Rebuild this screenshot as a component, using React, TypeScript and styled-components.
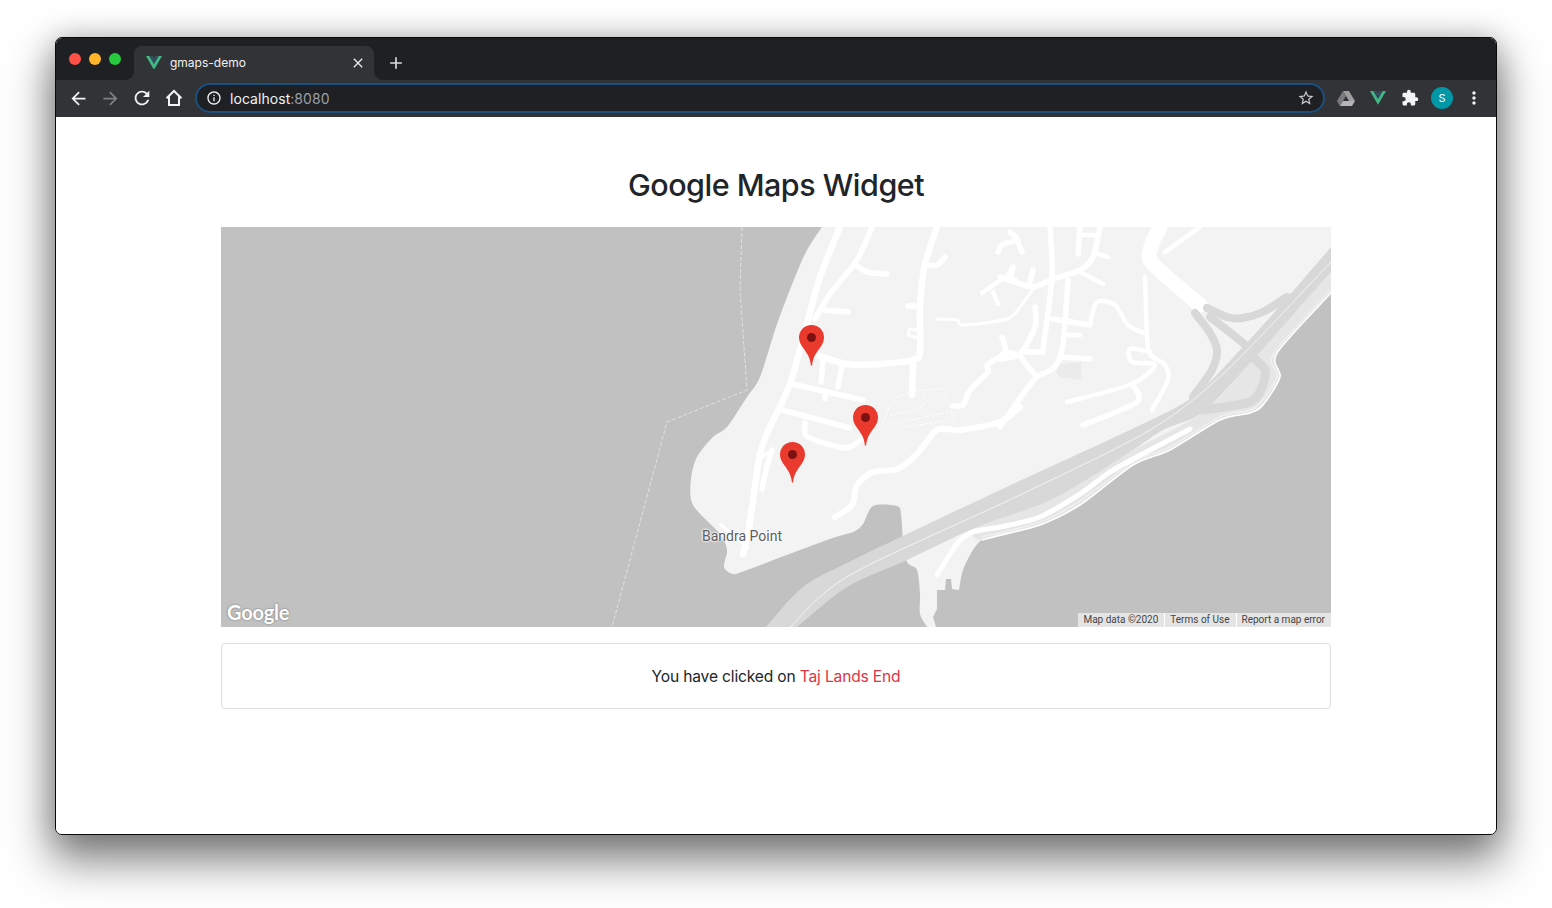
import React from "react";
import styled, { createGlobalStyle } from "styled-components";
import { MdArrowBack, MdArrowForward, MdRefresh, MdClose, MdAdd, MdExtension, MdMoreVert, MdStarBorder, MdInfoOutline } from "react-icons/md";

const Global = createGlobalStyle`
  html, body { margin: 0; padding: 0; background: #fff; }
  body { font-family: Inter, "Liberation Sans", sans-serif; }
`;

const Stage = styled.div`
  width: 1552px; height: 908px; box-sizing: border-box; padding: 37px 55px 0; overflow: hidden;
`;
const Win = styled.div`
  width: 1442px; height: 798px; box-sizing: border-box; border: 1px solid #0a0a0a; border-radius: 7px;
  overflow: hidden; display: flex; flex-direction: column; background: #fff;
  box-shadow: 0 22px 44px 4px rgba(0,0,0,.5), 0 0 28px rgba(0,0,0,.18);
`;
const TitleBar = styled.div`
  height: 42px; flex: none; background: #1f2024; display: flex; align-items: flex-end;
`;
const Lights = styled.div`
  width: 78px; height: 42px; flex: none; box-sizing: border-box; padding: 15px 0 0 13px; display: flex; gap: 8px;
`;
const Light = styled.span<{ $c: string }>`
  width: 12px; height: 12px; border-radius: 50%; background: ${p => p.$c};
`;
const Tab = styled.div`
  width: 240px; height: 34px; box-sizing: border-box; background: #323337; border-radius: 8px 8px 0 0;
  display: flex; align-items: center; padding: 0 0 1px 12px; color: #f1f1f2; font-size: 12px; position: relative;
  &::before, &::after { content: ""; position: absolute; bottom: 0; width: 8px; height: 8px; }
  &::before { left: -8px; background: radial-gradient(circle at 0 0, #1f2024 7.5px, #323337 8px); }
  &::after { right: -8px; background: radial-gradient(circle at 100% 0, #1f2024 7.5px, #323337 8px); }
`;
const TabTitle = styled.span`margin-left: 8px; flex: 1;`;
const NewTab = styled.div`
  width: 44px; height: 34px; display: flex; align-items: center; justify-content: center; color: #dcdcde; font-size: 18px;
`;
const Toolbar = styled.div`
  height: 37px; box-sizing: border-box; flex: none; background: #323337; display: flex; align-items: center; padding: 0 6px 1px;
`;
const IconBtn = styled.div<{ $c?: string }>`
  width: 32px; height: 32px; flex: none; display: flex; align-items: center; justify-content: center;
  color: ${p => p.$c || "#f1f3f4"}; font-size: 20px;
`;
const Omni = styled.div`
  flex: 1; height: 30px; box-sizing: border-box; margin: 0 5px; border: 2px solid #1b4f7d; border-radius: 15px;
  background: #1f2024; display: flex; align-items: center; padding: 0 8px 0 9px; color: #f1f3f4; font-size: 14px;
`;
const Host = styled.span`margin-left: 8px; flex: 1; letter-spacing: .05px;`;
const Port = styled.span`color: #9aa0a6;`;
const Star = styled(MdStarBorder)`color: #c9cacc;`;
const Avatar = styled.div`
  width: 22px; height: 22px; border-radius: 50%; background: #0097a7; color: #fff; font-size: 11px;
  display: flex; align-items: center; justify-content: center;
`;
const Page = styled.main`
  flex: 1; background: #fff; display: flex; flex-direction: column; align-items: center; padding-top: 48px;
`;
const Heading = styled.h1`
  margin: 0 0 22px; font-size: 30.5px; line-height: 40px; font-weight: 500; color: #212529; letter-spacing: -.5px;
`;
const MapBox = styled.div`
  width: 1110px; height: 400px; position: relative; overflow: hidden; background: #c1c1c1; flex: none;
`;
const MapSvg = styled.svg`display: block; width: 1110px; height: 400px;`;
const Place = styled.span`
  position: absolute; left: 481px; top: 301px; font: 14px/16px Roboto, sans-serif; color: #5c5c5c;
  text-shadow: 0 0 2px #fff, 0 0 2px #fff, 0 0 3px #fff; white-space: nowrap;
`;
const GoogleMark = styled.span`
  position: absolute; left: 6px; top: 372px; font: 700 20px/26px Lato, sans-serif; color: #fff; letter-spacing: -.2px;
  text-shadow: 0 0 2px rgba(70,70,70,.7);
`;
const Attribution = styled.div`
  position: absolute; right: 0; bottom: 0; height: 14px; display: flex; background: #e4e4e4;
  font: 10px/14px Roboto, sans-serif; color: #444;
`;
const AttrItem = styled.span`
  padding: 0 6px 0 5px; white-space: nowrap; & + & { border-left: 1px solid #fff; }
`;
const Result = styled.div`
  width: 1110px; height: 66px; box-sizing: border-box; margin-top: 16px; border: 1px solid #dfdfdf; border-radius: 4px;
  padding-top: 23px; text-align: center; font-size: 15.6px; line-height: 20px; color: #212529; letter-spacing: -.17px;
`;
const Hit = styled.span`color: #dc3545;`;

const VueLogo = ({ size }: { size: number }) => (
  <svg width={size} height={size * 0.87} viewBox="0 0 256 221">
    <path fill="#41B883" d="M204.8 0H256L128 220.8 0 0h97.92L128 51.2 157.44 0z" />
    <path fill="#34495E" d="M50.56 0L128 133.12 204.8 0h-47.36L128 51.2 98.56 0z" />
  </svg>
);
const Home = () => (
  <svg width="20" height="20" viewBox="0 0 20 20" fill="none" stroke="#f1f3f4" strokeWidth="2" strokeLinejoin="miter">
    <path d="M2.5 10.2 10 3l7.5 7.2M5 8.5V17h10V8.5" />
  </svg>
);
const Drive = () => (
  <svg width="18" height="16" viewBox="0 0 18 16">
    <path fill="#9e9e9e" d="M6 1h6l6 10h-6z" />
    <path fill="#7a7a7a" d="M6 1 0 11l3 5 6-10z" />
    <path fill="#b5b5b5" d="M3 16h12l3-5H6z" />
    <path fill="#323337" d="M7.4 11 9 8.2l1.6 2.8z" />
  </svg>
);
const Pin = ({ x, y }: { x: number; y: number }) => (
  <g transform={`translate(${x} ${y})`}>
    <path fill="#ea3a2d" d="M0 0C-7 0-12.5 5.5-12.5 12.4c0 4 1.7 6.9 4.200 10.500C-4.800 27.900-1.300 32-.6 40.500h1.200C1.300 32 4.800 27.900 8.300 22.900c2.500-3.600 4.200-6.500 4.200-10.500C12.500 5.500 7 0 0 0z" />
    <circle cy="12.500" r="4.500" fill="#7c1111" />
  </g>
);

// Draws a hand-traced list of "x y x y ..." points as a smooth curve.
const curve = (pts: string, close = false, t = 0.14) => {
  const n = pts.trim().split(/\s+/).map(Number);
  const p: [number, number][] = [];
  for (let i = 0; i < n.length; i += 2) p.push([n[i], n[i + 1]]);
  const at = (i: number) => (close ? p[(i + p.length) % p.length] : p[Math.max(0, Math.min(p.length - 1, i))]);
  let d = `M${p[0][0]} ${p[0][1]}`;
  const end = close ? p.length : p.length - 1;
  for (let i = 0; i < end; i++) {
    const a = at(i - 1), b = at(i), c = at(i + 1), e = at(i + 2);
    d += `C${(b[0] + (c[0] - a[0]) * t).toFixed(1)} ${(b[1] + (c[1] - a[1]) * t).toFixed(1)} ${(c[0] - (e[0] - b[0]) * t).toFixed(1)} ${(c[1] - (e[1] - b[1]) * t).toFixed(1)} ${c[0]} ${c[1]}`;
  }
  return d + (close ? "z" : "");
};

const coast = "982 540 1000 535 1040 525 1080 505 1133 465 1170 450 1220 420 1250 413 1263 405 1280 377 1277 353 1331 293";
const landWest = "822 227 807 250 795 277 777 324 760 377 747 397 727 427 713 437 697 457 691 479 693 505 720 534 727 550 724 567 733 574 747 570 827 540 853 532 863 524 873 506 897 506 901 514 903 540 907 562 917 570 920 594 920 614 927 627";
const landNotch = "M927 627H936L933 617 937 609V590H945L946 579H951L952 589 959 590";
const landEast = "959 590 963 570 973 550 982 540 1000 535 1040 525 1080 505 1133 465 1170 450 1220 420 1250 413 1263 405 1280 377 1277 353 1331 293";
const land = `${curve(landWest)}${landNotch.replace(/^M/, "L")}${curve(landEast).replace(/^M[^C]*/, "")}L1331 227z`;
const highway = `${curve("1331 247 1287 298 1240 350 1193 397 1130 430 1000 490 853 560 803 587 766 627")}L797 627${curve("797 627 847 587 907 560 977 527 1053 499 1130 452 1163 430 1203 412 1253 360 1315 290 1331 272").replace(/^M[^C]*/, "")}z`;
const lightArea = `${curve("1331 272 1253 360 1203 412 1130 452 1053 499 977 527 982 540 1040 525 1080 505 1133 465 1170 450 1220 420 1250 413 1263 405 1280 377 1277 353 1331 293")}z`;

const roads: [number, string][] = [
  [6.5, "840 227 820 277 808 320 790 384 770 427 760 454 752 507 748 534 743 554"],
  [5.5, "872 227 857 260 830 294 815 319"],
  [5.5, "855 264 867 272 887 274"],
  [5.5, "823 310 848 312"],
  [6.5, "937 227 925 264 920 307 920 352 913 360 880 364 847 364 817 355"],
  [5.5, "925 265 937 265 945 257"],
  [5.5, "908 306 920 306"],
  [3, "920 331 910 329 909 335 920 338"],
  [6.5, "913 364 912 395"],
  [5.5, "823 360 821 382"],
  [5.5, "842 365 838 387"],
  [5.5, "792 384 863 400"],
  [5.5, "825 394 825 399"],
  [5.5, "782 410 850 428"],
  [5.5, "805 423 808 437 847 448 865 435"],
  [5.5, "772 450 766 470 762 489"],
  [3, "772 450 762 457"],
  [3, "720 524 748 548"],
  [6, "835 517 852 505 857 485 873 472 897 469 917 454 937 430 960 430 1000 422 1020 407"],
  [5.5, "1002 337 1005 352 987 365 988 372 970 390 963 405 953 406"],
  [5.5, "1005 352 1020 355"],
  [3, "937 319 957 320 963 325 1007 319 1020 307 1033 289"],
  [4.5, "982 293 1007 277 1020 284"],
  [4.5, "993 292 998 304"],
  [4.5, "1012 267 1007 277"],
  [5.5, "998 252 1003 244 1017 240 1010 232"],
  [5.5, "1017 240 1022 252"],
  [5.5, "1050 227 1052 277 1043 350"],
  [5.5, "1068 280 1063 344 1055 367 1037 377 1023 394 1007 417 1000 427"],
  [5.5, "1080 227 1078 254"],
  [5.5, "1100 227 1093 257 1080 270 1053 279 1033 287 1010 280 1000 277"],
  [4.5, "1082 235 1098 235"],
  [4.5, "1098 254 1108 257"],
  [4.5, "1080 272 1103 284"],
  [5.5, "1013 267 1010 280"],
  [5.5, "1033 270 1030 282"],
  [5.5, "1035 307 1035 327 1020 354 1000 359"],
  [5.5, "1043 352 1020 354 1037 377"],
  [5.5, "1053 319 1090 325"],
  [4.5, "1067 335 1080 335"],
  [5.5, "1063 357 1090 359"],
  [4.5, "1090 324 1097 302 1115 305 1128 325 1147 334"],
  [4.5, "1145 277 1147 334 1150 354 1165 365 1168 380 1152 410"],
  [4.5, "1150 352 1130 349 1132 362 1155 365 1132 384 1067 402"],
  [5.5, "1132 384 1137 402 1083 425"],
  [4.5, "1165 252 1200 227"],
  [15, "1160 227 1151 247 1153 264 1200 305"],
];
const ramps: [number, string][] = [
  [8, "1195 313 1210 333 1217 350 1212 370 1193 397"],
  [8, "1207 308 1227 317 1243 318 1263 312 1287 297"],
  [8, "1210 317 1243 343 1253 357"],
  [9, "1253 357 1265 370 1262 387 1250 402 1203 410"],
];
const dashed = [
  "883 424 897 397 940 389 947 399 957 427",
  "890 415 920 408 925 395",
  "892 424 935 415 950 412",
  "905 427 950 420",
];

export default function App() {
  return (
    <Stage>
      <Global />
      <Win>
        <TitleBar>
          <Lights>
            <Light $c="#ff5148" /><Light $c="#ffb429" /><Light $c="#27c93f" />
          </Lights>
          <Tab>
            <VueLogo size={16} />
            <TabTitle>gmaps-demo</TabTitle>
            <IconBtn as="span" $c="#e8eaed"><MdClose size={16} /></IconBtn>
          </Tab>
          <NewTab><MdAdd size={20} /></NewTab>
        </TitleBar>
        <Toolbar>
          <IconBtn><MdArrowBack size={21} /></IconBtn>
          <IconBtn $c="#7d7f83"><MdArrowForward size={21} /></IconBtn>
          <IconBtn><MdRefresh size={22} /></IconBtn>
          <IconBtn><Home /></IconBtn>
          <Omni>
            <MdInfoOutline size={16} />
            <Host>localhost<Port>:8080</Port></Host>
            <Star size={18} />
          </Omni>
          <IconBtn><Drive /></IconBtn>
          <IconBtn><VueLogo size={16} /></IconBtn>
          <IconBtn><MdExtension size={18} /></IconBtn>
          <IconBtn><Avatar>S</Avatar></IconBtn>
          <IconBtn><MdMoreVert size={20} /></IconBtn>
        </Toolbar>
        <Page>
          <Heading>Google Maps Widget</Heading>
          <MapBox>
            <MapSvg viewBox="221 227 1110 400">
              <path d={land} fill="#f3f3f3" />
              <path d="M1055 370 1060 364 1082 362 1081 380 1060 377z" fill="#ebebeb" />
              <path d="M742 227 740 290 747 390 667 422 612 627" fill="none" stroke="#e2e2e2" strokeWidth="1" strokeDasharray="4 2" />
              {roads.map(([w, pts]) => (
                <path key={pts} d={curve(pts)} fill="none" stroke="#fff" strokeWidth={w} strokeLinecap="round" strokeLinejoin="round" />
              ))}
              {dashed.map(pts => (
                <path key={pts} d={curve(pts)} fill="none" stroke="#fff" strokeWidth="1" strokeDasharray="3 2" />
              ))}
              <path d={lightArea} fill="#e6e6e6" />
              <path d={highway} fill="#d8d8d8" />
              {ramps.map(([w, pts]) => (
                <path key={pts} d={curve(pts)} fill="none" stroke="#d8d8d8" strokeWidth={w} strokeLinecap="round" />
              ))}
              <path d={curve("790 627 850 575 1020 495 1150 430 1225 372 1331 262")} fill="none" stroke="#f4f4f4" strokeWidth="1" />
              <path d={curve("937 575 957 544 973 532 1000 527 1040 517 1080 494 1107 474 1133 459 1190 429")} fill="none" stroke="#fff" strokeWidth="5" strokeLinecap="round" />
              <path d={curve(coast)} fill="none" stroke="#fff" strokeWidth="1.5" />
              <path d={curve("982 537 1040 522 1080 501 1133 462 1170 447 1220 417 1250 410 1261 402 1277 377 1274 353 1331 290")} fill="none" stroke="#f6f6f6" strokeWidth="1" />
              <Pin x={811.5} y={325} />
              <Pin x={865.5} y={405} />
              <Pin x={792.5} y={442} />
            </MapSvg>
            <Place>Bandra Point</Place>
            <GoogleMark>Google</GoogleMark>
            <Attribution>
              <AttrItem>Map data ©2020</AttrItem>
              <AttrItem>Terms of Use</AttrItem>
              <AttrItem>Report a map error</AttrItem>
            </Attribution>
          </MapBox>
          <Result>You have clicked on <Hit>Taj Lands End</Hit></Result>
        </Page>
      </Win>
    </Stage>
  );
}
